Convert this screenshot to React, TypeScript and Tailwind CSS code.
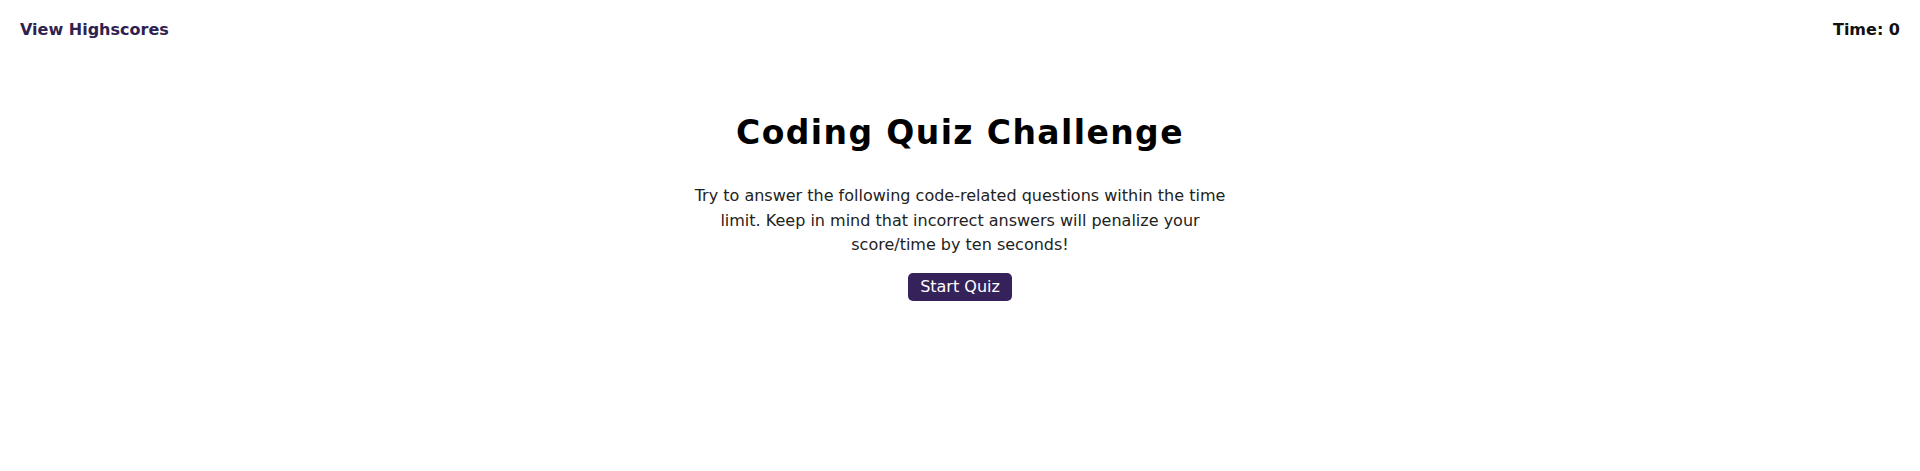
export default function App() {
  return (
    <div className="min-h-[471px] bg-white font-['DejaVu_Sans',sans-serif]">
      <header className="flex items-center justify-between px-5 pt-[18px]">
        <a className="text-base leading-6 font-bold text-[#2f2250]">View Highscores</a>
        <div className="text-base leading-6 font-bold text-[#111]">Time: 0</div>
      </header>
      <main className="flex flex-col items-center pt-[70px]">
        <h1 className="text-[33px] font-bold leading-[41px] tracking-[1.4px] text-black">Coding Quiz Challenge</h1>
        <p className="mt-[31px] w-[545px] text-center text-base leading-[24.5px] text-[#222]">
          Try to answer the following code-related questions within the time limit. Keep in mind that incorrect answers will penalize your score/time by ten seconds!
        </p>
        <button className="mt-[15px] rounded-[5px] bg-[#36225a] px-3 py-[2px] text-base leading-6 text-white">
          Start Quiz
        </button>
      </main>
    </div>
  );
}
